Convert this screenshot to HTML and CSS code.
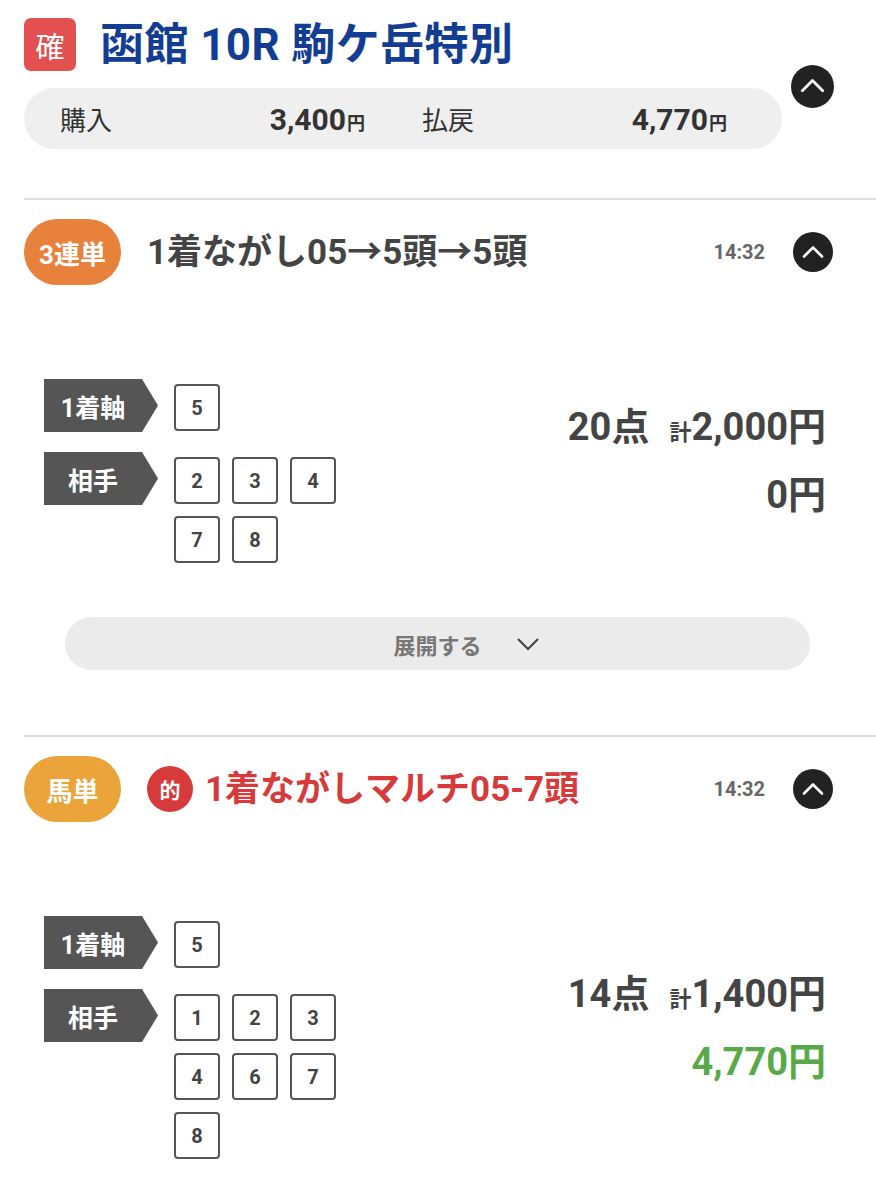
FILE: index.html
```html
<!DOCTYPE html>
<html lang="ja">
<head>
<meta charset="utf-8">
<link rel="stylesheet" href="styles.css">
</head>
<body>
<div class="page">
  <header class="race">
    <div class="race-main">
      <div class="race-title">
        <span class="kaku">確</span>
        <h1>函館 10R 駒ケ岳特別</h1>
      </div>
      <div class="summary">
        <div class="sum-item"><span class="sum-label">購入</span><span class="sum-val">3,400<small>円</small></span></div>
        <div class="sum-item"><span class="sum-label">払戻</span><span class="sum-val">4,770<small>円</small></span></div>
      </div>
    </div>
    <span class="toggle big"><svg viewBox="0 0 40 40" width="43" height="43"><polyline points="10.5,24 20,14.5 29.5,24" fill="none" stroke="#fff" stroke-width="2.6" stroke-linecap="round" stroke-linejoin="round"/></svg></span>
  </header>

  <hr class="divider">

  <section class="bet">
    <div class="bet-head">
      <span class="type orange">3連単</span>
      <h2 class="bet-title">1着ながし05→5頭→5頭</h2>
      <span class="time">14:32</span>
      <span class="toggle"><svg viewBox="0 0 40 40" width="40" height="40"><polyline points="11,24.5 20,15.5 29,24.5" fill="none" stroke="#fff" stroke-width="2.6" stroke-linecap="round" stroke-linejoin="round"/></svg></span>
    </div>
    <div class="bet-body">
      <div class="legs">
        <div class="leg">
          <span class="leg-label">1着軸</span>
          <div class="nums"><span class="num">5</span></div>
        </div>
        <div class="leg">
          <span class="leg-label">相手</span>
          <div class="nums"><span class="num">2</span><span class="num">3</span><span class="num">4</span><span class="num">7</span><span class="num">8</span></div>
        </div>
      </div>
      <div class="totals">
        <div class="total-line"><span>20点</span><span class="kei">計</span><span>2,000円</span></div>
        <div class="total-line">0円</div>
      </div>
    </div>
    <div class="expand">
      <span>展開する</span>
      <svg viewBox="0 0 24 16" width="24" height="16"><polyline points="2,3 12,13 22,3" fill="none" stroke="#444" stroke-width="2"/></svg>
    </div>
  </section>

  <hr class="divider second">

  <section class="bet">
    <div class="bet-head">
      <span class="type yellow">馬単</span>
      <span class="hit">的</span>
      <h2 class="bet-title red">1着ながしマルチ05-7頭</h2>
      <span class="time">14:32</span>
      <span class="toggle"><svg viewBox="0 0 40 40" width="40" height="40"><polyline points="11,24.5 20,15.5 29,24.5" fill="none" stroke="#fff" stroke-width="2.6" stroke-linecap="round" stroke-linejoin="round"/></svg></span>
    </div>
    <div class="bet-body">
      <div class="legs">
        <div class="leg">
          <span class="leg-label">1着軸</span>
          <div class="nums"><span class="num">5</span></div>
        </div>
        <div class="leg">
          <span class="leg-label">相手</span>
          <div class="nums"><span class="num">1</span><span class="num">2</span><span class="num">3</span><span class="num">4</span><span class="num">6</span><span class="num">7</span><span class="num">8</span></div>
        </div>
      </div>
      <div class="totals">
        <div class="total-line"><span>14点</span><span class="kei">計</span><span>1,400円</span></div>
        <div class="total-line green">4,770円</div>
      </div>
    </div>
  </section>
</div>
</body>
</html>
```

FILE: styles.css
```css
* { box-sizing: border-box; }
html, body { margin: 0; padding: 0; background: #fff; }
body {
  font-family: Roboto, "Noto Sans CJK JP", sans-serif;
  color: #444;
  width: 876px;
  overflow: hidden;
}
.page { padding-top: 18px; }

.race {
  display: flex;
  align-items: center;
  padding: 0 42px 0 24px;
}
.race-main { width: 758px; }
.race-title {
  display: flex;
  align-items: center;
  gap: 24px;
  height: 53px;
}
.kaku {
  width: 52px;
  height: 53px;
  border-radius: 7px;
  background: #e2514f;
  color: #fff;
  font-size: 29px;
  display: flex;
  align-items: center;
  justify-content: center;
  font-family: "Noto Sans CJK JP", sans-serif;
}
.race-title h1 {
  margin: 0;
  font-size: 44px;
  font-weight: 700;
  color: #123d92;
  line-height: 1;
  letter-spacing: 0.4px;
}
.summary {
  margin-top: 17px;
  height: 61px;
  border-radius: 31px;
  background: #efefef;
  display: grid;
  grid-template-columns: 305px 305px;
  column-gap: 57px;
  align-items: center;
  padding-left: 36px;
}
.sum-item {
  display: flex;
  justify-content: space-between;
  align-items: baseline;
}
.sum-label { font-size: 26px; color: #333; }
.sum-val { font-size: 30px; font-weight: 700; color: #333; }
.sum-val small { font-size: 18px; margin-left: 1px; }

.toggle {
  margin-left: auto;
  width: 40px;
  height: 40px;
  border-radius: 50%;
  background: #222;
  display: flex;
  align-items: center;
  justify-content: center;
  flex: none;
}
.toggle svg { display: block; }
.toggle.big { width: 43px; height: 43px; margin-top: 5px; }

.divider {
  border: 0;
  height: 2px;
  background: #dcdcdc;
  margin: 49px 0 0 24px;
}
.divider.second { margin-top: 65px; }

.bet { padding: 0 43px 0 24px; }
.bet-head {
  display: flex;
  align-items: center;
  margin-top: 19px;
  height: 66px;
}
.type {
  width: 97px;
  height: 66px;
  border-radius: 33px;
  color: #fff;
  font-weight: 700;
  font-size: 26px;
  display: flex;
  align-items: center;
  justify-content: center;
  flex: none;
}
.type.orange { background: #e8813b; }
.type.yellow { background: #eaa43a; }
.hit {
  width: 46px;
  height: 46px;
  border-radius: 50%;
  background: #d63a3b;
  color: #fff;
  font-weight: 700;
  font-size: 21px;
  display: flex;
  align-items: center;
  justify-content: center;
  margin-left: 26px;
  flex: none;
}
.bet-title {
  margin: 0 0 0 26px;
  font-size: 35px;
  font-weight: 700;
  color: #444;
  line-height: 1;
}
.hit + .bet-title { margin-left: 12px; }
.bet-title.red { color: #d63a3b; }
.time {
  margin-left: auto;
  margin-right: 28px;
  font-size: 20px;
  font-weight: 700;
  color: #666;
}
.time + .toggle { margin-left: 0; }

.bet-body {
  display: flex;
  align-items: center;
  justify-content: space-between;
  margin-top: 94px;
  padding-left: 20px;
}
.legs { display: flex; flex-direction: column; gap: 20px; }
.leg { display: flex; align-items: flex-start; gap: 16px; }
.leg-label {
  width: 114px;
  height: 53px;
  background: #555;
  color: #fff;
  font-weight: 700;
  font-size: 25px;
  display: flex;
  align-items: center;
  justify-content: center;
  padding-right: 16px;
  clip-path: polygon(0 0, calc(100% - 16px) 0, 100% 50%, calc(100% - 16px) 100%, 0 100%);
}
.nums {
  display: flex;
  flex-wrap: wrap;
  gap: 12px;
  width: 162px;
  padding-top: 5px;
}
.num {
  width: 46px;
  height: 47px;
  border: 2px solid #555;
  border-radius: 4px;
  display: flex;
  align-items: center;
  justify-content: center;
  font-size: 20px;
  font-weight: 700;
  color: #444;
}
.totals {
  display: flex;
  flex-direction: column;
  align-items: flex-end;
  padding-right: 7px;
  padding-bottom: 20px;
}
.total-line {
  font-size: 38px;
  font-weight: 700;
  color: #444;
  height: 68px;
  line-height: 68px;
  display: flex;
  align-items: baseline;
}
.total-line .kei { font-size: 22px; margin-left: 20px; }
.total-line.green { color: #58aa48; }

.expand {
  margin: 54px 23px 0 41px;
  height: 53px;
  border-radius: 27px;
  background: #ebebeb;
  display: flex;
  align-items: center;
  justify-content: center;
  gap: 34px;
  padding-left: 58px;
  color: #777;
  font-size: 22px;
  font-weight: 700;
}
```
